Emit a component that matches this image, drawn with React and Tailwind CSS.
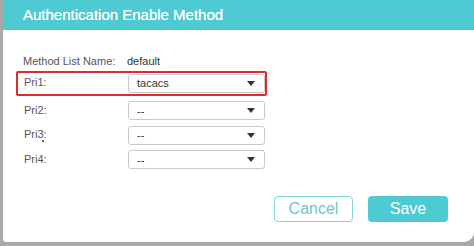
import { useState } from 'react';

const rows = [
  { label: 'Pri1:', value: 'tacacs', highlight: true },
  { label: 'Pri2:', value: '--' },
  { label: 'Pri3:', value: '--', dot: true },
  { label: 'Pri4:', value: '--' },
];

function Select({ value }) {
  return (
    <div className="w-[137px] h-[19px] border border-[#c9c9c9] rounded-[3px] bg-white flex items-center justify-between pl-[8px] pr-[9px] text-[11px] text-[#333]">
      <span>{value}</span>
      <svg width="8" height="5" viewBox="0 0 8 5"><path d="M0 0h8L4 5z" fill="#333" /></svg>
    </div>
  );
}

export default function App() {
  const [rowsState] = useState(rows);
  return (
    <div className="w-[474px] h-[246px] bg-[#a8a8a8] pl-[3px] pb-[4px]" style={{ fontFamily: '"Liberation Sans", Arial, sans-serif' }}>
      <div className="h-full bg-white rounded-br-[10px] rounded-bl-[3px] flex flex-col overflow-hidden">
        <div className="h-[30px] bg-[#4ecad3] flex items-center pl-[20px] text-white text-[15px] shrink-0 [text-shadow:0_0_0.4px_#fff]">
          Authentication Enable Method
        </div>
        <div className="pl-[13px] pt-[24px] text-[11px] text-[#555]">
          <div className="flex items-center h-[14px] pl-[7px]">
            <span className="w-[104px]">Method List Name:</span>
            <span className="text-[#333]">default</span>
          </div>
          <div className="mt-[3px] flex flex-col">
            {rowsState.map(r => (
              <div
                key={r.label}
                className={`flex items-center pl-[6px] w-[251px] h-[24.5px] relative ${r.highlight ? 'border-2 border-[#e02a2a] rounded-[2px] mb-[3px]' : 'border-2 border-transparent'}`}
              >
                <span className="w-[104px] -mt-[2px]">{r.label}</span>
                <Select value={r.value} />
                {r.dot && <span className="absolute left-[24px] top-[15px] w-[2px] h-[2px] rounded-full bg-[#333]" />}
              </div>
            ))}
          </div>
        </div>
        <div className="flex-1" />
        <div className="flex justify-end gap-[15px] pr-[26px] pb-[20px]">
          <button className="w-[79px] h-[26px] border border-[#7fd3d9] rounded-[4px] text-[16px] text-[#6cc6cd] bg-white">Cancel</button>
          <button className="w-[80px] h-[26px] rounded-[4px] text-[16px] text-white bg-[#4ecad3]">Save</button>
        </div>
      </div>
    </div>
  );
}
